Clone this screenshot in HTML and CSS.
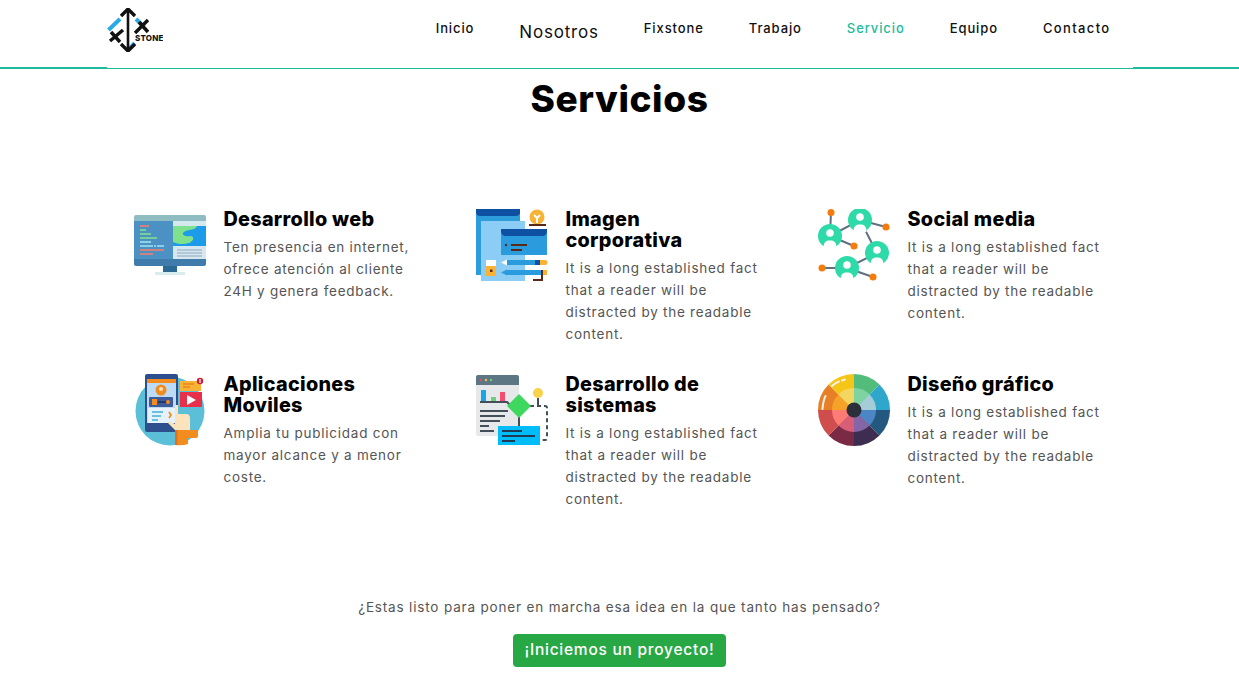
FILE: index.html
```html
<!DOCTYPE html>
<html lang="es">
<head>
<meta charset="utf-8">
<title>Servicios</title>
<link rel="stylesheet" href="styles.css">
</head>
<body>
<header class="site-header">
  <div class="header-inner">
    <a class="logo" href="#">
      <svg width="56" height="44" viewBox="0 0 56 44">
        <path d="M1.500 22 13 11" stroke="#29a9e8" stroke-width="4"/>
        <path d="M29 11l8 8M23 40l4.500-5" stroke="#29a9e8" stroke-width="4"/>
        <path d="M3 33 16 22M4 24 13 34M28 25 41 12M32 14 41 24" stroke="#111" stroke-width="3.400" fill="none"/>
        <path d="M21 1v42" stroke="#111" stroke-width="2.600"/>
        <path d="M14 8 21 1l7 7M14 36l7 7 7-7" stroke="#111" stroke-width="3.400" fill="none"/>
        <text x="28" y="33" class="logo-text">STONE</text>
      </svg>
    </a>
    <nav class="nav">
      <a href="#">Inicio</a>
      <a href="#" class="nav-big">Nosotros</a>
      <a href="#">Fixstone</a>
      <a href="#">Trabajo</a>
      <a href="#" class="nav-active">Servicio</a>
      <a href="#">Equipo</a>
      <a href="#" class="nav-last">Contacto</a>
    </nav>
  </div>
</header>
<main class="content">
  <h1 class="page-title">Servicios</h1>
  <section class="services">
    <article class="service">
      <svg class="icon" viewBox="0 0 72 72">
        <path d="M2 6h68a2 2 0 0 1 2 2v4H0V8a2 2 0 0 1 2-2z" fill="#8fbcc0"/>
        <rect y="12" width="39" height="38" fill="#4c91c4"/>
        <rect x="39" y="12" width="33" height="38" fill="#d5e8ee"/>
        <rect x="39" y="17" width="33" height="20" fill="#1b9bea"/>
        <path d="M39 17h24c-2 5-9 3-13 6-3 2 0 5 6 4 5 0 4 5-1 7-6 2-12 1-16-1z" fill="#7fe08e"/>
        <rect x="41" y="38" width="29" height="12" fill="#d9e6ef"/>
        <path d="M43 41h25M43 44h25M43 47h25" stroke="#8aa9c4" stroke-width="1.200"/>
        <path d="M0 50h72v5a2 2 0 0 1-2 2H2a2 2 0 0 1-2-2z" fill="#3f7bab"/>
        <rect x="29" y="57" width="14" height="6" fill="#2a6a95"/>
        <rect x="21" y="63" width="30" height="3" fill="#d8eeee"/>
        <path d="M6 17h9" stroke="#f27f6c" stroke-width="1.600"/>
        <path d="M6 21h6" stroke="#7fe08e" stroke-width="1.600"/>
        <path d="M6 25h11" stroke="#7fe08e" stroke-width="1.600"/>
        <path d="M6 29h17" stroke="#7fe08e" stroke-width="1.600"/>
        <path d="M6 33h11" stroke="#9fe3f2" stroke-width="1.600"/>
        <path d="M6 37h24" stroke="#9fe3f2" stroke-width="1.600" stroke-dasharray="13 1 2 1"/>
        <path d="M6 41h24" stroke="#f27f6c" stroke-width="1.600"/>
        <path d="M6 45h13" stroke="#f27f6c" stroke-width="1.600"/>
      </svg>
      <div class="service-text">
        <h2>Desarrollo web</h2>
        <p>Ten presencia en internet,<br>ofrece atención al cliente<br>24H y genera feedback.</p>
      </div>
    </article>
    <article class="service">
      <svg class="icon" viewBox="0 0 72 72">
        <rect width="44" height="66" fill="#2d9cdb"/>
        <path d="M0 0h44v3c0 3-2 4-5 4H5C2 7 0 6 0 3z" fill="#0e50a2"/>
        <rect x="5" y="12" width="44" height="60" fill="#8ccdf5"/>
        <rect x="25" y="20" width="46" height="26" fill="#2a9bdc"/>
        <path d="M25 20h46v2c0 3-2 5-5 5H30c-3 0-5-2-5-5z" fill="#0e50a2"/>
        <circle cx="30" cy="36" r="1.200" fill="#5a2a18"/>
        <path d="M35 36h16M35 41h11" stroke="#5a2a18" stroke-width="2"/>
        <circle cx="61" cy="8" r="7.500" fill="#f9b233"/>
        <path d="M58 6l3 3 3-3M61 9v5" stroke="#fff" stroke-width="2" fill="none"/>
        <rect x="53" y="15" width="17" height="2" fill="#5a2a18"/>
        <path d="M25 53.500l6-3v6z" fill="#fff"/>
        <rect x="31" y="51" width="28" height="5" fill="#2a9bdc"/>
        <rect x="59" y="51" width="5" height="5" fill="#0e50a2"/>
        <path d="M64 51h5a2.500 2.500 0 0 1 0 5h-5z" fill="#f9b233"/>
        <path d="M25 63.500l6-3v6z" fill="#2a9bdc"/>
        <rect x="31" y="61" width="34" height="5" fill="#2a9bdc"/>
        <rect x="65" y="61" width="6" height="5" fill="#f9b233"/>
        <rect x="10" y="51" width="10" height="6" fill="#fff"/>
        <rect x="10" y="57" width="10" height="10" fill="#f9b233"/>
        <rect x="14" y="60.500" width="2.500" height="2.500" fill="#5a2a18"/>
        <path d="M57 71h9V61" stroke="#5a2a18" stroke-width="2" fill="none"/>
      </svg>
      <div class="service-text">
        <h2>Imagen<br>corporativa</h2>
        <p>It is a long established fact<br>that a reader will be<br>distracted by the readable<br>content.</p>
      </div>
    </article>
    <article class="service">
      <svg class="icon" viewBox="0 0 72 72">
        <path d="M13 3 12 27 42 11 68 18M12 27 36 37M42 11 59 44 29 59 4 59M29 59 55 68" stroke="#5f7080" stroke-width="2" fill="none"/>
        <g class="people">
          <circle cx="42" cy="11" r="12"/><circle cx="12" cy="27" r="12"/><circle cx="59" cy="44" r="12"/><circle cx="29" cy="59" r="12"/>
        </g>
        <g fill="#fff">
          <circle cx="42" cy="8" r="3.800"/><path d="M35.500 23c0-6 2.500-7.500 6.500-7.500s6.500 1.500 6.500 7.500q-6.500 1.500-13 0z"/>
          <circle cx="12" cy="24" r="3.800"/><path d="M5.500 39c0-6 2.500-7.500 6.500-7.500s6.500 1.500 6.500 7.500q-6.500 1.500-13 0z"/>
          <circle cx="59" cy="41" r="3.800"/><path d="M52.500 56c0-6 2.500-7.500 6.500-7.500s6.500 1.500 6.500 7.500q-6.500 1.500-13 0z"/>
          <circle cx="29" cy="56" r="3.800"/><path d="M22.500 71c0-6 2.500-7.500 6.500-7.500s6.500 1.500 6.500 7.500q-6.500 1.500-13 0z"/>
        </g>
        <g fill="#f57c0c">
          <circle cx="13" cy="3.500" r="3.500"/><circle cx="68" cy="18" r="3.500"/><circle cx="36" cy="37" r="3.500"/><circle cx="4" cy="59" r="3.500"/><circle cx="55" cy="68" r="3.500"/>
        </g>
      </svg>
      <div class="service-text">
        <h2>Social media</h2>
        <p>It is a long established fact<br>that a reader will be<br>distracted by the readable<br>content.</p>
      </div>
    </article>
    <article class="service">
      <svg class="icon" viewBox="0 0 72 72">
        <circle cx="36" cy="37" r="34.500" fill="#5bbfd8"/>
        <rect x="11" width="33" height="58" rx="2" fill="#2d4f8e"/>
        <rect x="13" y="5" width="29" height="44" fill="#bcdcf5"/>
        <rect x="13" y="5" width="29" height="4" fill="#f28c1e"/>
        <circle cx="27" cy="16" r="5.500" fill="#f28c1e"/>
        <circle cx="27" cy="15" r="2" fill="#fde3bc"/>
        <rect x="15" y="23" width="24" height="10" rx="1" fill="#3f5a9a"/>
        <rect x="18" y="25" width="5" height="6" fill="#f28c1e"/>
        <path d="M24 28h12" stroke="#22386b" stroke-width="2"/>
        <circle cx="34" cy="28" r="2" fill="#f28c1e"/>
        <rect x="14" y="34" width="27" height="15" fill="#e6f2fb"/>
        <path d="M18 38h11M18 42h9M18 46h6" stroke="#3fb2d6" stroke-width="1.600"/>
        <path d="M35 38l2 3-2 3" stroke="#f28c1e" stroke-width="1.800" fill="none"/>
        <path d="M41 31h3v9h8c3 0 4 2 4 4v12H41L34 49l1-2 6 3z" fill="#fde3bc"/>
        <path d="M41 56h23v6q0 2-2 2h-8v6q-6 2-13 1z" fill="#f28c1e"/>
        <path d="M41 56h2.500v15H41z" fill="#e2701a"/>
        <rect x="46" y="7" width="21" height="10" fill="#f9b233"/>
        <path d="M49 10h11M49 13h7" stroke="#e2701a" stroke-width="1.200"/>
        <circle cx="66" cy="7" r="3.200" fill="#c91f37"/>
        <rect x="65.400" y="5" width="1.200" height="4" fill="#fff"/>
        <rect x="46" y="18" width="22" height="15" fill="#e8304a"/>
        <path d="M53 21l9 5-9 5z" fill="#fff"/>
      </svg>
      <div class="service-text">
        <h2>Aplicaciones<br>Moviles</h2>
        <p>Amplia tu publicidad con<br>mayor alcance y a menor<br>coste.</p>
      </div>
    </article>
    <article class="service">
      <svg class="icon" viewBox="0 0 72 72">
        <rect y="1" width="43" height="61" rx="2" fill="#e6e8ea"/>
        <path d="M2 1h39a2 2 0 0 1 2 2v8H0V3a2 2 0 0 1 2-2z" fill="#5d7684"/>
        <circle cx="5" cy="6" r="1.200" fill="#e8505b"/><circle cx="10" cy="6" r="1.200" fill="#f2c14e"/><circle cx="15" cy="6" r="1.200" fill="#6fcf7f"/>
        <rect x="5" y="16" width="5" height="12" fill="#17a7e8"/>
        <rect x="15" y="23" width="5" height="5" fill="#6fcf7f"/>
        <rect x="24" y="18" width="5" height="10" fill="#f44f6c"/>
        <path d="M4 28h27l6 6" stroke="#454f5c" stroke-width="2" fill="none"/>
        <path d="M4 37h28M4 42h25M4 47h20M4 52h9M4 57h14" stroke="#454f5c" stroke-width="2"/>
        <path d="M43 32v20" stroke="#454f5c" stroke-width="2"/>
        <path d="M62 24v7" stroke="#454f5c" stroke-width="2"/>
        <path d="M54 32h15q2 0 2 2v30q0 2-2 2h-5" stroke="#454f5c" stroke-width="2" stroke-dasharray="4 3" fill="none"/>
        <path d="M43 20 55 32 43 44 31 32z" fill="#3ed85f"/>
        <circle cx="62" cy="19" r="5" fill="#f8d24a"/>
        <rect x="22" y="52" width="42" height="19" fill="#00bdf7"/>
        <path d="M26 57h20M26 62h33M26 67h13" stroke="#1f3a55" stroke-width="1.800"/>
      </svg>
      <div class="service-text">
        <h2>Desarrollo de<br>sistemas</h2>
        <p>It is a long established fact<br>that a reader will be<br>distracted by the readable<br>content.</p>
      </div>
    </article>
    <article class="service">
      <svg class="icon" viewBox="0 0 72 72">
        <path d="M36 36V0A36 36 0 0 1 61.460 10.540z" fill="#52bc7a"/>
        <path d="M36 36 61.460 10.540A36 36 0 0 1 72 36z" fill="#2fa7cc"/>
        <path d="M36 36H72A36 36 0 0 1 61.460 61.460z" fill="#25587f"/>
        <path d="M36 36 61.460 61.460A36 36 0 0 1 36 72z" fill="#3d2d50"/>
        <path d="M36 36V72A36 36 0 0 1 10.540 61.460z" fill="#7a2a44"/>
        <path d="M36 36 10.540 61.460A36 36 0 0 1 0 36z" fill="#cf4d4d"/>
        <path d="M36 36H0A36 36 0 0 1 10.540 10.540z" fill="#e77f27"/>
        <path d="M36 36 10.540 10.540A36 36 0 0 1 36 0z" fill="#f5c518"/>
        <path d="M36 36V14A22 22 0 0 1 51.560 20.440z" fill="#7fd3a0"/>
        <path d="M36 36 51.560 20.440A22 22 0 0 1 58 36z" fill="#a5cdd8"/>
        <path d="M36 36H58A22 22 0 0 1 51.560 51.560z" fill="#4c86c6"/>
        <path d="M36 36 51.560 51.560A22 22 0 0 1 36 58z" fill="#8466a6"/>
        <path d="M36 36V58A22 22 0 0 1 20.440 51.560z" fill="#d85d78"/>
        <path d="M36 36 20.440 51.560A22 22 0 0 1 14 36z" fill="#ff7b74"/>
        <path d="M36 36H14A22 22 0 0 1 20.440 20.440z" fill="#f5a328"/>
        <path d="M36 36 20.440 20.440A22 22 0 0 1 36 14z" fill="#f3d65f"/>
        <circle cx="36" cy="36" r="7.500" fill="#2b2f3a"/>
        <path d="M4.500 35Q5 27 7.500 22" stroke="#f4f0e6" stroke-width="2" fill="none" stroke-linecap="round"/>
        <path d="M14 12Q17 9 21 7.500M24 6.500l3-1" stroke="#f4f0e6" stroke-width="2" fill="none" stroke-linecap="round"/>
      </svg>
      <div class="service-text">
        <h2>Diseño gráfico</h2>
        <p>It is a long established fact<br>that a reader will be<br>distracted by the readable<br>content.</p>
      </div>
    </article>
  </section>
  <section class="cta">
    <p>¿Estas listo para poner en marcha esa idea en la que tanto has pensado?</p>
    <a class="cta-button" href="#">¡Iniciemos un proyecto!</a>
  </section>
</main>
</body>
</html>
```
FILE: styles.css
```css
* { box-sizing: border-box; }
html, body { margin: 0; padding: 0; background: #fff; }
body {
  font-family: Inter, "Noto Sans", "Liberation Sans", sans-serif;
  color: #000;
  overflow: hidden;
  height: 700px;
}
a { text-decoration: none; color: inherit; }

.site-header {
  height: 69px;
  border-bottom: 2px solid #1abc9c;
}
.header-inner {
  width: 1026px;
  margin: 0 auto;
  height: 68px;
  background: #fff;
  display: flex;
  justify-content: space-between;
  align-items: flex-start;
}
.logo { display: block; margin-top: 8px; line-height: 0; }
.logo-text { font: 800 8px Inter, sans-serif; letter-spacing: 0.2px; fill: #111; }

.nav {
  display: flex;
  gap: 45px;
  padding-right: 22px;
  margin-top: 20px;
  align-items: flex-start;
  font-size: 13px;
  font-weight: 500;
  letter-spacing: 0.9px;
  line-height: 16px;
  color: #111;
}
.nav-big { font-size: 17px; letter-spacing: 0.8px; margin-top: 3px; line-height: 19px; font-weight: 400; }
.nav-active { color: #1abc9c; }
.nav-last { letter-spacing: 1.350px; }

.content {
  width: 1026px;
  margin: 0 auto;
}
.page-title {
  margin: 0;
  padding-top: 6px;
  text-align: center;
  font-size: 37px;
  line-height: 48px;
  font-weight: 800;
  letter-spacing: 0.6px;
}
.services {
  display: grid;
  grid-template-columns: repeat(3, 342px);
  row-gap: 29px;
  margin-top: 86px;
}
.service {
  display: flex;
  gap: 18px;
  padding-left: 27px;
}
.icon { width: 72px; height: 72px; flex: none; display: block; }
.people circle { fill: #2edba8; }
.service-text h2 {
  margin: 0 0 6px;
  font-size: 19.800px;
  line-height: 21px;
  font-weight: 800;
  letter-spacing: 0.3px;
}
.service-text p {
  margin: 0;
  font-size: 13.500px;
  line-height: 22px;
  letter-spacing: 0.75px;
  color: #555;
  white-space: nowrap;
}
.cta {
  display: flex;
  flex-direction: column;
  align-items: center;
  margin-top: 87px;
}
.cta p {
  margin: 0 0 17px;
  font-size: 13.500px;
  line-height: 20px;
  letter-spacing: 0.83px;
  color: #555;
}
.cta-button {
  display: block;
  width: 213px;
  height: 33px;
  line-height: 32px;
  text-align: center;
  background: #28a745;
  color: #fff;
  border-radius: 4px;
  font-size: 15.500px;
  font-weight: 500;
  letter-spacing: 0.75px;
}
```
